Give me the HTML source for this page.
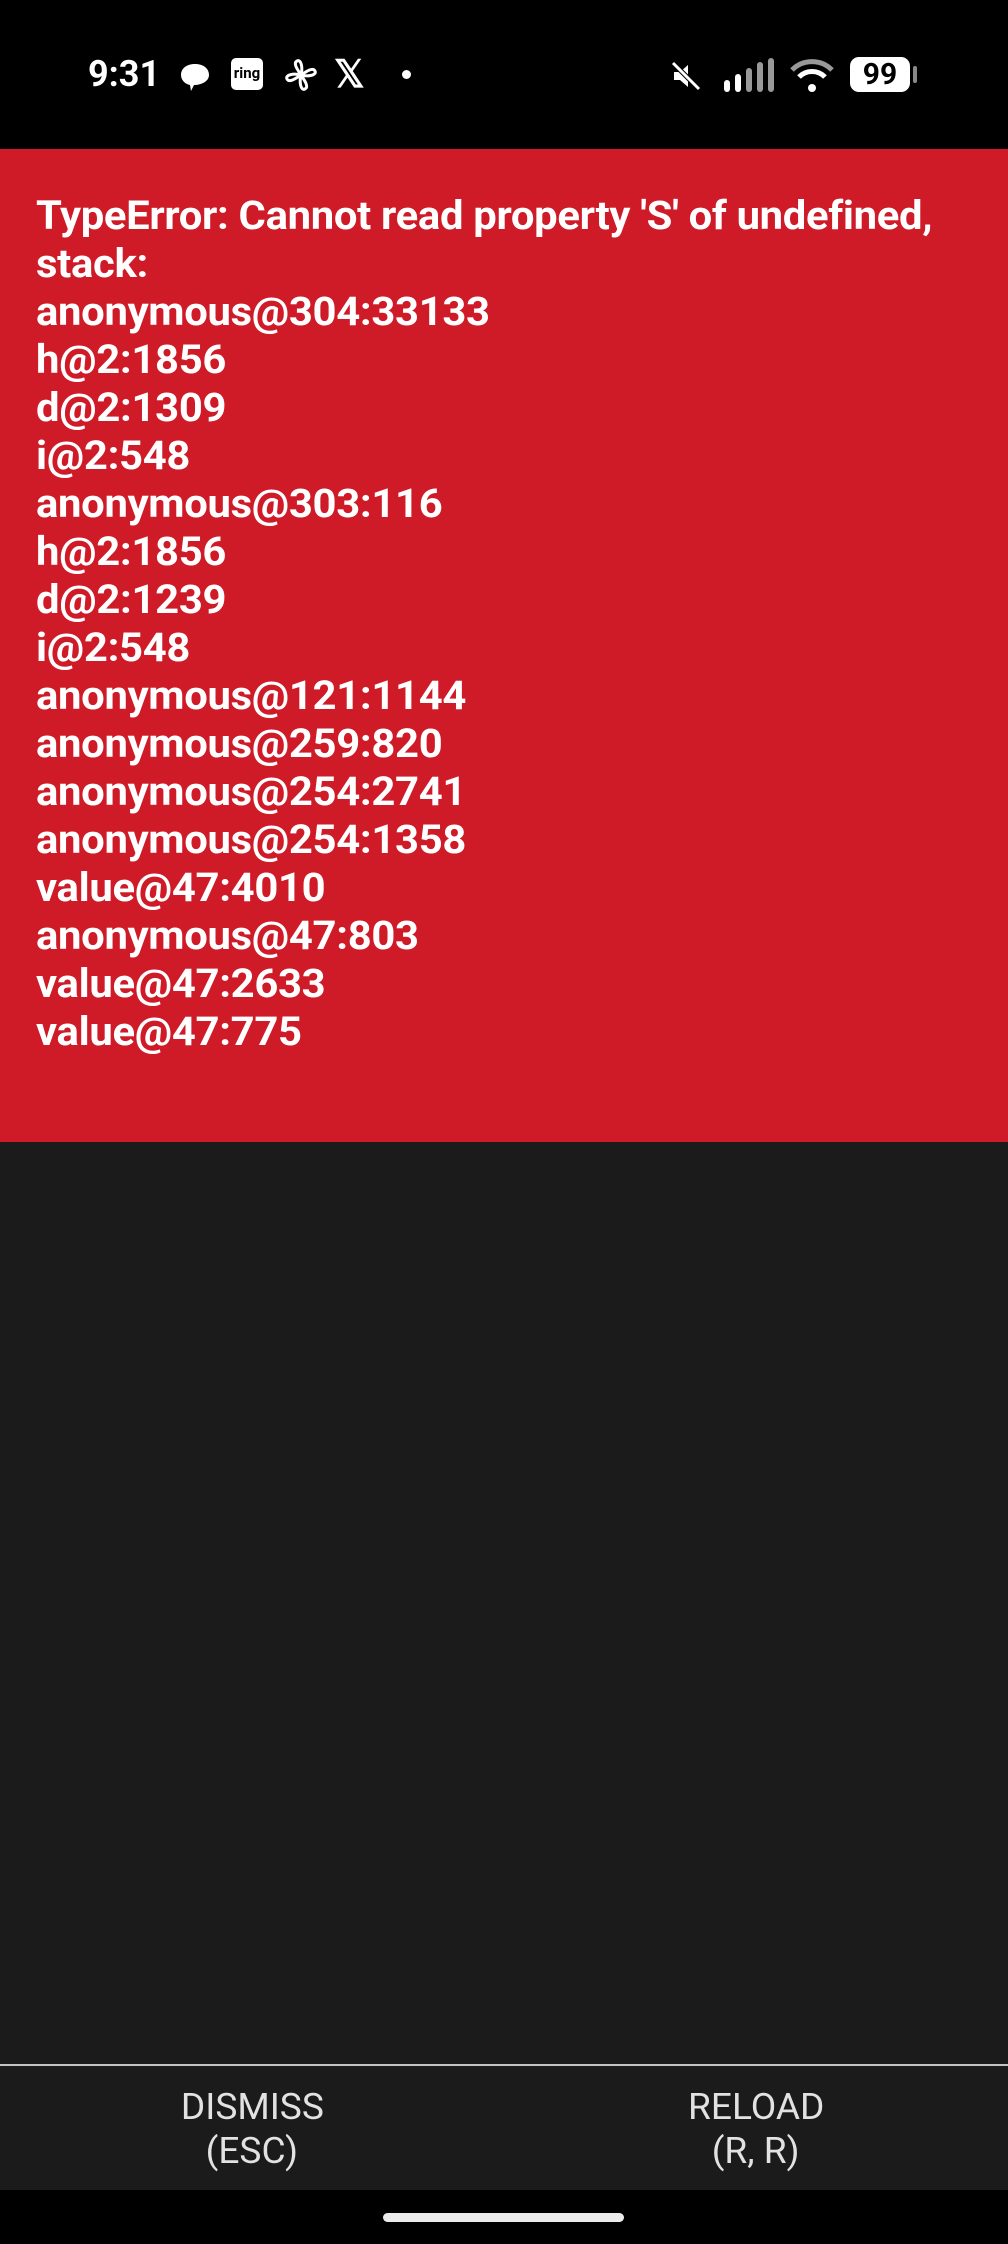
<!DOCTYPE html>
<html><head><style>
*{margin:0;padding:0;box-sizing:border-box}
body{width:1008px;height:2244px;background:#000;position:relative;overflow:hidden;font-family:"Roboto","Liberation Sans",sans-serif}
#status{position:absolute;left:0;top:0;width:1008px;height:149px;background:#000;color:#fff}
#red{position:absolute;left:0;top:149px;width:1008px;height:993px;background:#cf1a27}
#txt{position:absolute;left:36px;top:192px;color:#fff;font-weight:bold;font-size:40px;line-height:48px;white-space:pre;transform:scaleX(1.045);transform-origin:left top;letter-spacing:-0.3px}
#dark{position:absolute;left:0;top:1142px;width:1008px;height:1048px;background:#1b1b1b}
#line{position:absolute;left:0;top:2064px;width:1008px;height:2px;background:#c4c4c4}
.btn{position:absolute;top:2085px;width:504px;text-align:center;color:#e2e2e2;font-size:36px;line-height:44px}
.btn span{display:inline-block;transform:scaleX(1.03)}
#home{position:absolute;left:383px;top:2213px;width:241px;height:9px;border-radius:5px;background:#ececec}
</style></head><body>
<div id="status">
  <div style="position:absolute;left:88px;top:53px;font-size:36px;font-weight:bold;transform:scaleX(1.0);transform-origin:left">9:31</div>
  <svg style="position:absolute;left:178px;top:60px" width="34" height="34" viewBox="0 0 34 34"><path d="M17 4C8 4 3 9 3 15c0 5 4 9 9 10l1 6 3-6c8 0 15-4 15-10S26 4 17 4z" fill="#fff"/></svg>
  <div style="position:absolute;left:231px;top:58px;width:32px;height:32px;background:#fff;border-radius:5px;color:#000;font-size:15px;font-weight:bold;text-align:center;line-height:30px">ring</div>
  <svg style="position:absolute;left:283px;top:57px" width="36" height="36" viewBox="0 0 36 36" fill="none" stroke="#fff" stroke-width="3"><path d="M18 18C14 12 10 6 14 4s6 6 4 14zM18 18c6-4 12-8 14-4s-6 6-14 4zM18 18c4 6 8 12 4 14s-6-6-4-14zM18 18c-6 4-12 8-14 4s6-6 14-4z"/></svg>
  <div style="position:absolute;left:334px;top:52px;font-size:38px;font-weight:bold;color:#fff">𝕏</div>
  <div style="position:absolute;left:402px;top:70px;width:9px;height:9px;border-radius:50%;background:#fff"></div>
  <svg style="position:absolute;left:670px;top:60px" width="32" height="32" viewBox="0 0 32 32"><path d="M4 12h6l8-7v22l-8-7H4z" fill="#fff"/><path d="M3 3l26 26" stroke="#000" stroke-width="5"/><path d="M3 3l26 26" stroke="#fff" stroke-width="3"/></svg>
  <svg style="position:absolute;left:722px;top:58px" width="56" height="34" viewBox="0 0 56 34"><rect x="2" y="22" width="6" height="12" rx="3" fill="#fff"/><rect x="13" y="16" width="6" height="18" rx="3" fill="#fff"/><rect x="24" y="10" width="6" height="24" rx="3" fill="#999"/><rect x="35" y="4" width="6" height="30" rx="3" fill="#999"/><rect x="46" y="0" width="6" height="34" rx="3" fill="#999"/></svg>
  <svg style="position:absolute;left:790px;top:58px" width="44" height="36" viewBox="0 0 44 36"><path d="M2 12a28 28 0 0 1 40 0" stroke="#999" stroke-width="5" fill="none"/><path d="M9 19a18 18 0 0 1 26 0" stroke="#fff" stroke-width="5" fill="none"/><circle cx="22" cy="30" r="4" fill="#fff"/></svg>
  <div style="position:absolute;left:850px;top:57px;width:60px;height:35px;background:#fff;border-radius:9px;color:#000;font-size:30px;font-weight:bold;text-align:center;line-height:35px">99</div>
  <div style="position:absolute;left:913px;top:66px;width:4px;height:17px;background:#888;border-radius:2px"></div>
</div>
<div id="red"></div>
<div id="txt">TypeError: Cannot read property 'S' of undefined,
stack:
anonymous@304:33133
h@2:1856
d@2:1309
i@2:548
anonymous@303:116
h@2:1856
d@2:1239
i@2:548
anonymous@121:1144
anonymous@259:820
anonymous@254:2741
anonymous@254:1358
value@47:4010
anonymous@47:803
value@47:2633
value@47:775</div>
<div id="dark"></div>
<div id="line"></div>
<div class="btn" style="left:0"><span>DISMISS</span><br><span>(ESC)</span></div>
<div class="btn" style="left:504px"><span>RELOAD</span><br><span>(R, R)</span></div>
<div id="home"></div>
</body></html>
